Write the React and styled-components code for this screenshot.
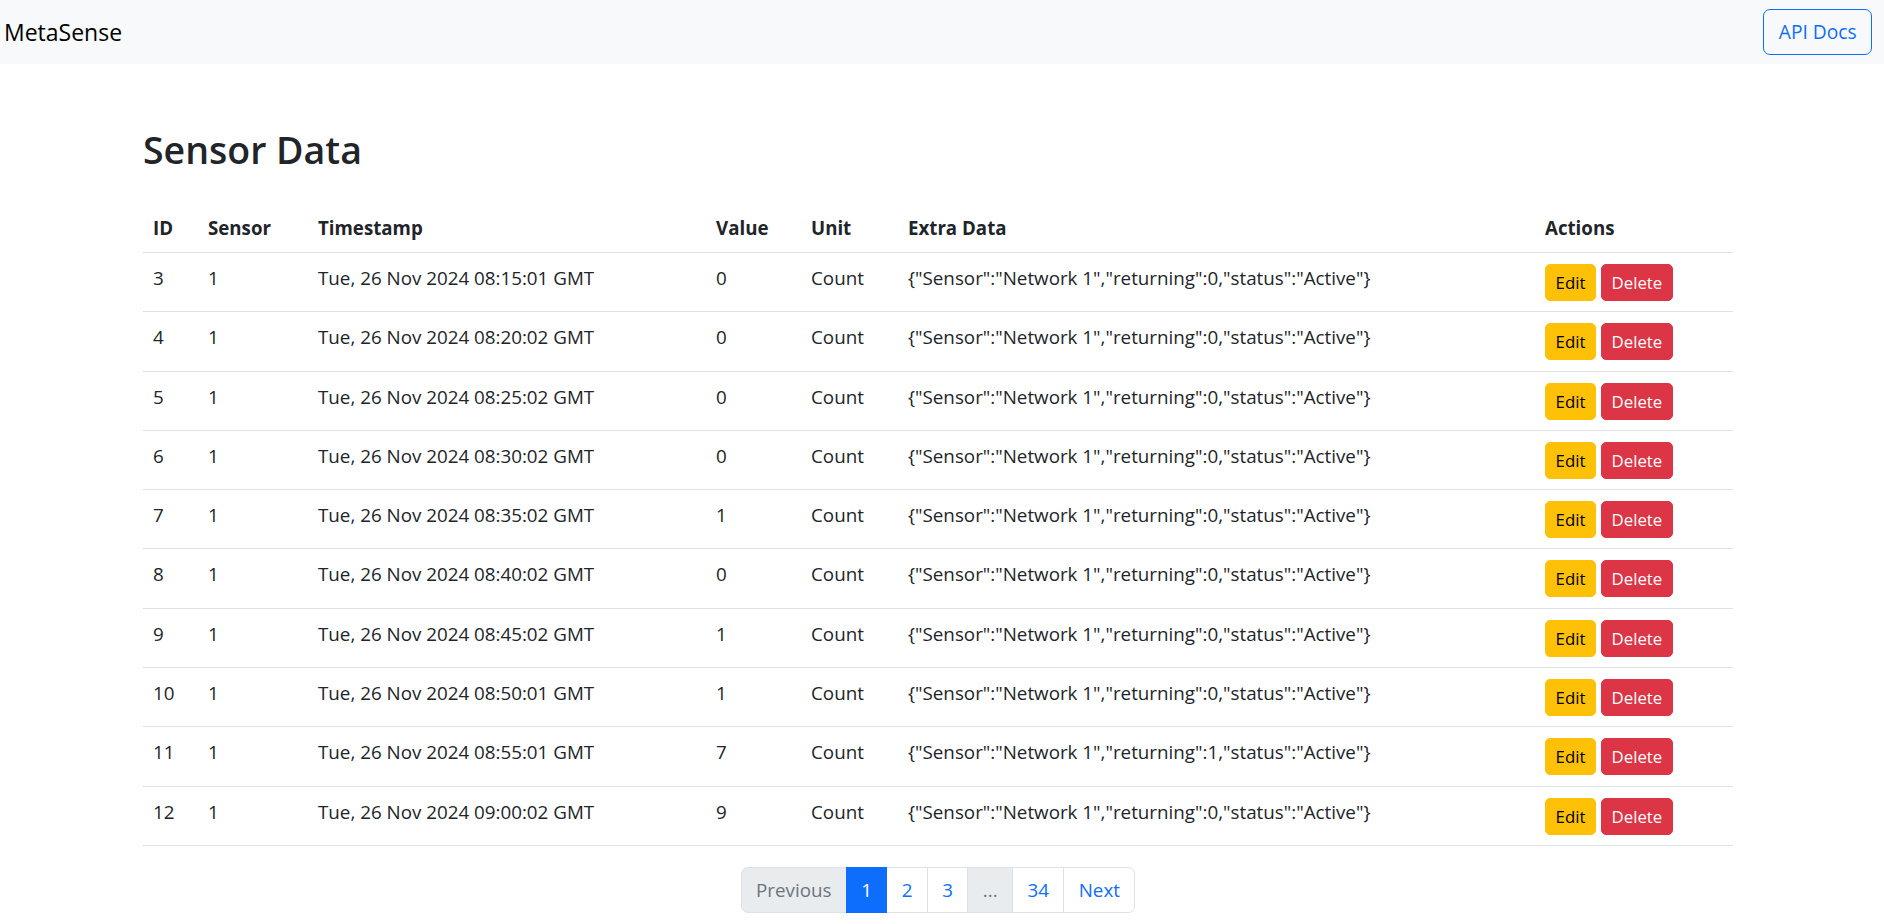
import React from "react";
import styled, { createGlobalStyle } from "styled-components";

const rows = [
  { id: 3, time: "08:15:01", value: 0, returning: 0 },
  { id: 4, time: "08:20:02", value: 0, returning: 0 },
  { id: 5, time: "08:25:02", value: 0, returning: 0 },
  { id: 6, time: "08:30:02", value: 0, returning: 0 },
  { id: 7, time: "08:35:02", value: 1, returning: 0 },
  { id: 8, time: "08:40:02", value: 0, returning: 0 },
  { id: 9, time: "08:45:02", value: 1, returning: 0 },
  { id: 10, time: "08:50:01", value: 1, returning: 0 },
  { id: 11, time: "08:55:01", value: 7, returning: 1 },
  { id: 12, time: "09:00:02", value: 9, returning: 0 },
];

const columns = [
  { label: "ID", width: 55 },
  { label: "Sensor", width: 110 },
  { label: "Timestamp", width: 398 },
  { label: "Value", width: 95 },
  { label: "Unit", width: 97 },
  { label: "Extra Data", width: 637 },
  { label: "Actions", width: 198 },
];

const pages = [
  { label: "Previous", kind: "disabled" },
  { label: "1", kind: "active" },
  { label: "2" },
  { label: "3" },
  { label: "...", kind: "disabled" },
  { label: "34" },
  { label: "Next" },
];

const App = () => {
  return (
    <>
      <GlobalStyle />
      <Navbar>
        <Brand>MetaSense</Brand>
        <OutlineButton>API Docs</OutlineButton>
      </Navbar>
      <Container>
        <Title>Sensor Data</Title>
        <Table>
          <colgroup>
            {columns.map(col => (
              <Col key={col.label} $w={col.width} />
            ))}
          </colgroup>
          <thead>
            <tr>
              {columns.map(col => (
                <Th key={col.label}>{col.label}</Th>
              ))}
            </tr>
          </thead>
          <tbody>
            {rows.map(row => (
              <tr key={row.id}>
                <Td>{row.id}</Td>
                <Td>1</Td>
                <Td>Tue, 26 Nov 2024 {row.time} GMT</Td>
                <Td>{row.value}</Td>
                <Td>Count</Td>
                <Td>{`{"Sensor":"Network 1","returning":${row.returning},"status":"Active"}`}</Td>
                <Td>
                  <Actions>
                    <SmallButton $variant="warning">Edit</SmallButton>
                    <SmallButton $variant="danger">Delete</SmallButton>
                  </Actions>
                </Td>
              </tr>
            ))}
          </tbody>
        </Table>
        <Pagination>
          {pages.map(p => (
            <PageItem key={p.label} $kind={p.kind}>
              {p.label}
            </PageItem>
          ))}
        </Pagination>
      </Container>
    </>
  );
};

export default App;

const GlobalStyle = createGlobalStyle`
html, body {
  margin: 0;
  padding: 0;
  background: #fff;
  overflow: hidden;
}
body {
  font-family: "Open Sans", "Noto Sans", sans-serif;
  font-size: 18.8px;
  line-height: 1.5;
  color: #212529;
}
*, *::before, *::after {
  box-sizing: border-box;
}
`

const Navbar = styled.nav`
height: 64px;
background: #f8f9fa;
display: flex;
justify-content: space-between;
align-items: center;
padding: 0 12px 0 4px;
`
const Brand = styled.div`
font-size: 23px;
line-height: 1.5;
color: #000;
`
const OutlineButton = styled.button`
font-family: inherit;
font-size: 19.2px;
line-height: 28.8px;
height: 46px;
padding: 7px 14.4px;
color: #0d6efd;
background: transparent;
border: 1px solid #0d6efd;
border-radius: 7px;
`
const Container = styled.main`
width: 1590px;
margin: 0 0 0 143px;
`
const Title = styled.h2`
margin: 63px 0 31px;
font-size: 37.5px;
line-height: 46px;
font-weight: 600;
color: #212529;
`
const Table = styled.table`
width: 100%;
table-layout: fixed;
border-collapse: collapse;
margin-bottom: 21px;
`
const Col = styled.col`
width: ${p => p.$w}px;
`
const Th = styled.th`
text-align: left;
font-weight: 700;
font-size: 18.7px;
padding: 9.6px 10px;
line-height: 28.8px;
border-bottom: 1px solid #dee2e6;
vertical-align: bottom;
white-space: nowrap;
`
const Td = styled.td`
padding: 11px 10px 10.3px;
font-size: 18.8px;
line-height: 28.8px;
border-bottom: 1px solid #dee2e6;
vertical-align: top;
white-space: nowrap;
`
const Actions = styled.div`
display: flex;
gap: 5px;
`
const SmallButton = styled.button`
font-family: inherit;
font-size: 16.8px;
line-height: 25px;
height: 37px;
padding: 5px 9.6px;
border-radius: 5px;
border: 1px solid ${p => (p.$variant === "danger" ? "#dc3545" : "#ffc107")};
background: ${p => (p.$variant === "danger" ? "#dc3545" : "#ffc107")};
color: ${p => (p.$variant === "danger" ? "#fff" : "#000")};
`
const Pagination = styled.ul`
list-style: none;
margin: 0;
padding: 0;
display: flex;
justify-content: center;
`
const PageItem = styled.li`
font-size: 18.8px;
line-height: 28.8px;
height: 46px;
padding: 7.6px 14.4px;
margin-left: -1px;
border: 1px solid ${p => (p.$kind === "active" ? "#0d6efd" : "#dee2e6")};
background: ${p => (p.$kind === "active" ? "#0d6efd" : p.$kind === "disabled" ? "#e9ecef" : "#fff")};
color: ${p => (p.$kind === "active" ? "#fff" : p.$kind === "disabled" ? "#6c757d" : "#0d6efd")};
position: relative;
z-index: ${p => (p.$kind === "active" ? 1 : 0)};
&:first-child {
  margin-left: 0;
  border-radius: 7px 0 0 7px;
}
&:last-child {
  border-radius: 0 7px 7px 0;
}
`
